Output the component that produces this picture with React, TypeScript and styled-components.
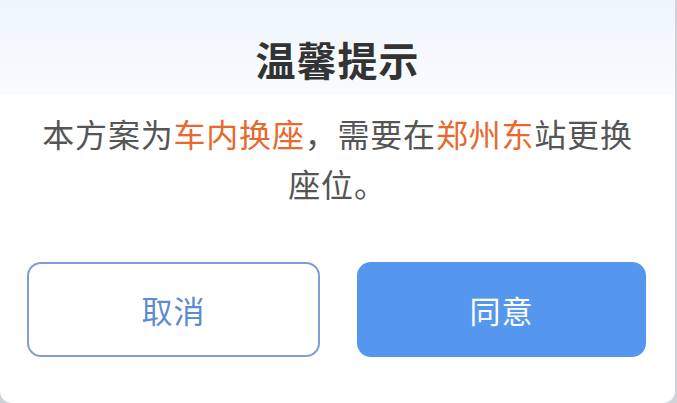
import styled, { createGlobalStyle } from 'styled-components';

const GlobalStyle = createGlobalStyle`
  html, body {
    margin: 0;
    padding: 0;
    background: #cfd2d6;
  }
  body {
    font-family: 'Noto Sans CJK SC', 'Noto Sans', sans-serif;
  }
`;

const Dialog = styled.div`
  width: 675px;
  height: 403px;
  background: #fff;
  border-radius: 0 0 12px 12px;
  display: flex;
  flex-direction: column;
  overflow: hidden;
`;

const Header = styled.div`
  height: 95px;
  box-sizing: border-box;
  padding-top: 39px;
  background: linear-gradient(180deg, #edf5fc 0%, #f3f8fd 40%, #f9fbfe 100%);
  text-align: center;
`;

const Title = styled.h1`
  margin: 0;
  font-size: 40px;
  line-height: 40px;
  font-weight: 700;
  color: #333;
  letter-spacing: 1px;
`;

const Message = styled.p`
  margin: 13px 0 0;
  padding: 0 38px;
  font-size: 32px;
  line-height: 50px;
  letter-spacing: 0.8px;
  color: #555;
  text-align: center;
`;

const Highlight = styled.span`
  color: #e8692e;
`;

const Actions = styled.div`
  display: flex;
  gap: 37px;
  margin-top: 54px;
  padding: 0 29px 0 27px;
`;

const Button = styled.button<{ primary?: boolean }>`
  flex: 1;
  height: 95px;
  border-radius: 14px;
  font-family: inherit;
  font-size: 31px;
  letter-spacing: 1px;
  cursor: pointer;
  border: ${(p) => (p.primary ? 'none' : '2px solid #7d9ed6')};
  background: ${(p) => (p.primary ? '#5597ef' : '#fff')};
  color: ${(p) => (p.primary ? '#fff' : '#5b8bd2')};
`;

export default function App() {
  return (
    <>
      <GlobalStyle />
      <Dialog>
        <Header>
          <Title>温馨提示</Title>
        </Header>
        <Message>
          本方案为<Highlight>车内换座</Highlight>，需要在
          <Highlight>郑州东</Highlight>站更换座位。
        </Message>
        <Actions>
          <Button>取消</Button>
          <Button primary>同意</Button>
        </Actions>
      </Dialog>
    </>
  );
}
